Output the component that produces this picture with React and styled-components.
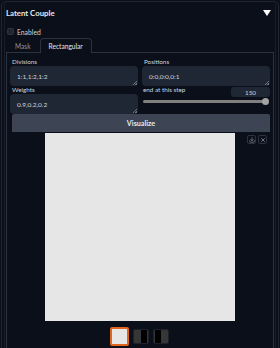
import React from "react";
import styled, { createGlobalStyle } from "styled-components";
import { Download, X } from "lucide-react";

const GlobalStyle = createGlobalStyle`
  html, body {
    margin: 0;
    padding: 0;
    background: #0b0f19;
    overflow: hidden;
  }
  body {
    font-family: "Lato", "Noto Sans", sans-serif;
    color: #e5e7eb;
  }
`;

const Page = styled.div`
  width: 280px;
  height: 348px;
  overflow: hidden;
  padding: 1px 1px 0 1px;
  box-sizing: border-box;
`;

const Panel = styled.div`
  border: 1px solid #1f2633;
  border-bottom: none;
  border-radius: 5px 5px 0 0;
  padding: 0 4px;
  height: 400px;
  box-shadow: inset 2px 0 0 #0b0f19, inset 3px 0 0 #161c28, inset -2px 0 0 #0b0f19, inset -3px 0 0 #161c28;
`;

const Header = styled.div`
  display: flex;
  align-items: center;
  justify-content: space-between;
  height: 22px;
  padding: 0 3px 0 0;
`;

const Title = styled.span`
  font-size: 7.8px;
  font-weight: 700;
  color: #e5e7eb;
`;

const Caret = styled.span`
  width: 0;
  height: 0;
  border-left: 4px solid transparent;
  border-right: 4px solid transparent;
  border-top: 6px solid #ffffff;
`;

const CheckRow = styled.label`
  display: flex;
  align-items: center;
  gap: 3px;
  height: 15px;
  padding-left: 1px;
  font-size: 6.8px;
  color: #d1d5db;
`;

const Box = styled.span`
  width: 7px;
  height: 7px;
  border-radius: 1.5px;
  background: #1f2633;
  border: 1px solid #2c3442;
  box-sizing: border-box;
`;

const TabBar = styled.div`
  display: flex;
  align-items: flex-end;
  height: 13px;
  border-bottom: 1px solid #2a3140;
`;

const Tab = styled.div`
  box-sizing: border-box;
  display: flex;
  align-items: center;
  padding: 0 8px;
  font-size: 6.6px;
  color: ${(p) => (p.$active ? "#e5e7eb" : "#8b93a1")};
  border: 1px solid ${(p) => (p.$active ? "#2a3140" : "transparent")};
  border-bottom: none;
  border-radius: 4px 4px 0 0;
  background: #0b0f19;
  margin-bottom: ${(p) => (p.$active ? "-1px" : "0")};
  height: ${(p) => (p.$active ? "15px" : "13px")};
`;

const TabBody = styled.div`
  border: 1px solid #2a3140;
  border-top: none;
  padding: 5px 3px 0 3px;
  height: 300px;
  position: relative;
`;

const Grid = styled.div`
  display: grid;
  grid-template-columns: 1fr 1fr;
  column-gap: 4px;
`;

const Field = styled.div`
  display: flex;
  flex-direction: column;
`;

const Label = styled.div`
  font-size: 6.3px;
  line-height: 7px;
  height: 8px;
  color: #d1d5db;
  padding-left: 2px;
`;

const Input = styled.div`
  position: relative;
  height: 20px;
  border-radius: 4px;
  background: #1f2735;
  display: flex;
  align-items: center;
  padding-left: 7px;
  font-size: 6.5px;
  color: #d1d5db;
  &::after {
    content: "";
    position: absolute;
    right: 1px;
    bottom: 1px;
    width: 4px;
    height: 4px;
    background: linear-gradient(135deg, transparent 45%, #6b7280 45%, #6b7280 60%, transparent 60%, transparent 75%, #6b7280 75%);
  }
`;

const StepColumn = styled.div`
  display: flex;
  flex-direction: column;
`;

const StepHead = styled.div`
  display: flex;
  justify-content: space-between;
  align-items: flex-start;
  height: 11px;
`;

const StepLabel = styled.span`
  font-size: 6.3px;
  line-height: 7px;
  color: #d1d5db;
  padding-left: 1px;
`;

const NumberBox = styled.div`
  width: 39px;
  height: 10px;
  margin-top: 1px;
  border-radius: 3px;
  background: #1f2735;
  font-size: 6.3px;
  color: #d1d5db;
  display: flex;
  align-items: center;
  justify-content: center;
`;

const Slider = styled.div`
  height: 9px;
  display: flex;
  align-items: center;
  padding: 0 1px;
`;

const Track = styled.div`
  flex: 1;
  height: 3px;
  border-radius: 2px;
  background: #808080;
`;

const Thumb = styled.div`
  width: 7px;
  height: 7px;
  border-radius: 50%;
  background: #a3a3a3;
  margin-left: -4px;
`;

const Button = styled.div`
  height: 18px;
  margin: 0 0 1px 2px;
  background: #3d4554;
  border-radius: 2px 2px 0 0;
  display: flex;
  align-items: center;
  justify-content: center;
  font-size: 7.2px;
  font-weight: 700;
  color: #e5e7eb;
`;

const ImageWrap = styled.div`
  display: flex;
  justify-content: center;
  position: relative;
`;

const Canvas = styled.div`
  width: 190px;
  height: 188px;
  background: #e6e6e6;
`;

const Tools = styled.div`
  position: absolute;
  top: 2px;
  right: 3px;
  display: flex;
  gap: 2px;
`;

const ToolButton = styled.div`
  width: 9px;
  height: 9px;
  border: 1px solid #2b3240;
  border-radius: 2px;
  box-sizing: border-box;
  display: flex;
  align-items: center;
  justify-content: center;
  color: #8b93a1;
`;

const Thumbs = styled.div`
  display: flex;
  justify-content: center;
  align-items: center;
  gap: 4px;
  margin-top: 6px;
  margin-left: -2px;
`;

const ThumbImg = styled.div`
  width: ${(p) => (p.$selected ? "19px" : "16px")};
  height: ${(p) => (p.$selected ? "19px" : "15px")};
  box-sizing: border-box;
  border-radius: 2px;
  border: ${(p) => (p.$selected ? "2px solid #e0661f" : "1px solid #1c212b")};
  background: ${(p) => p.$bg};
`;

export default function App() {
  return (
    <Page>
      <GlobalStyle />
      <Panel>
        <Header>
          <Title>Latent Couple</Title>
          <Caret />
        </Header>
        <CheckRow>
          <Box />
          Enabled
        </CheckRow>
        <TabBar>
          <Tab>Mask</Tab>
          <Tab $active>Rectangular</Tab>
        </TabBar>
        <TabBody>
          <Grid>
            <Field>
              <Label>Divisions</Label>
              <Input>1:1,1:2,1:2</Input>
            </Field>
            <Field>
              <Label>Positions</Label>
              <Input>0:0,0:0,0:1</Input>
            </Field>
            <Field>
              <Label>Weights</Label>
              <Input>0.9,0.2,0.2</Input>
            </Field>
            <StepColumn>
              <StepHead>
                <StepLabel>end at this step</StepLabel>
                <NumberBox>150</NumberBox>
              </StepHead>
              <Slider>
                <Track />
                <Thumb />
              </Slider>
            </StepColumn>
          </Grid>
          <Button>Visualize</Button>
          <ImageWrap>
            <Canvas />
            <Tools>
              <ToolButton>
                <Download size={6} strokeWidth={2.5} />
              </ToolButton>
              <ToolButton>
                <X size={6} strokeWidth={3} />
              </ToolButton>
            </Tools>
          </ImageWrap>
          <Thumbs>
            <ThumbImg $selected $bg="#e6e6e6" />
            <ThumbImg $bg="linear-gradient(90deg, #363636 0 50%, #000 50% 94%, #363636 94%)" />
            <ThumbImg $bg="linear-gradient(90deg, #363636 0 8%, #000 8% 50%, #363636 50%)" />
          </Thumbs>
        </TabBody>
      </Panel>
    </Page>
  );
}
